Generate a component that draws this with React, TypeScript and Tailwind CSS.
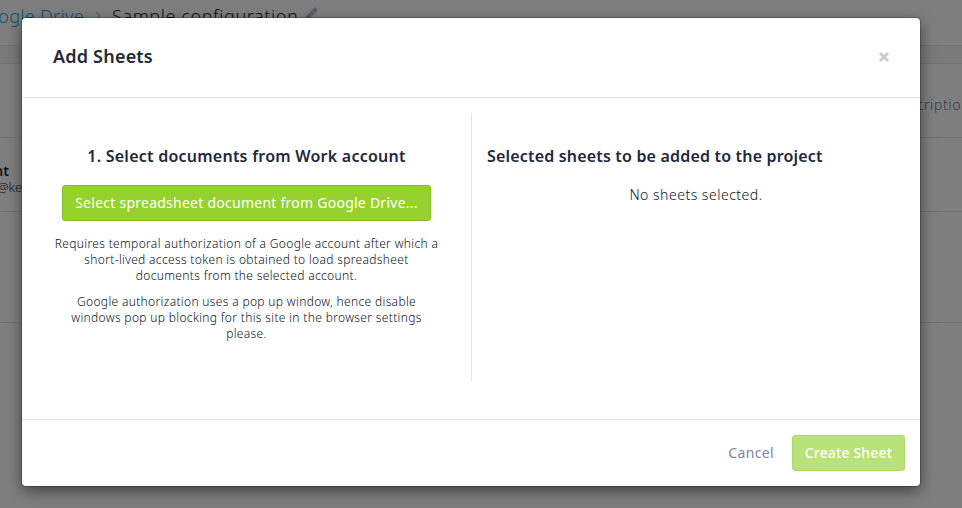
import React from "react";

const font = "font-['Noto_Sans','Open_Sans',sans-serif]";

function Backdrop() {
  return (
    <div className="h-full w-full overflow-hidden bg-white text-[#222939]">
      <div className="flex h-[46px] items-start border-b border-[#e6e6e6] whitespace-nowrap">
        <div className="flex h-[32px] w-[84px] shrink-0 items-center justify-end text-[18px] leading-[32px] font-light text-[#1ea6e6]">
          <span className="tracking-[0.3px]">Google Drive</span>
        </div>
        <svg className="mt-[11px] ml-[11px] h-[10px] w-[6px] shrink-0" viewBox="0 0 6 10" fill="none" stroke="#c4c4c4" strokeWidth="1.3">
          <path d="M1 1l4 4-4 4" />
        </svg>
        <span className="ml-[11px] w-[187px] text-[18px] leading-[32px] font-light tracking-[0.6px]">Sample configuration</span>
        <svg className="mt-[7px] ml-[6px] h-[13px] w-[13px] shrink-0" viewBox="0 0 13 13" fill="#b9bcc4">
          <path d="M0 13l.8-3.800L9.300.7q.7-.7 1.400 0l1.600 1.600q.7.700 0 1.400L3.800 12.200z" />
        </svg>
      </div>
      <div className="h-[18px] border-b border-[#e6e6e6] bg-[#f4f4f4]" />
      <div className="flex h-[74px] items-center justify-end border-b border-[#e6e6e6] pt-[7px]">
        <span className="-mr-[8px] text-[14px] font-light tracking-[0.6px] text-[#6c7795]">Description</span>
      </div>
      <div className="h-[74px] border-b border-[#e6e6e6] pt-[24px]">
        <div className="flex w-[9px] justify-end text-[14px] leading-[17px] font-semibold whitespace-nowrap">Work account</div>
        <div className="flex w-[30px] justify-end text-[13px] leading-[17px] font-light">work@keb</div>
      </div>
      <div className="h-[111px] border-b border-[#e6e6e6]" />
    </div>
  );
}

export default function App() {
  return (
    <div className={`relative h-[508px] w-[962px] overflow-hidden ${font}`}>
      <Backdrop />
      <div className="absolute inset-0 bg-black/50 px-[22px] pt-[18px]">
        <div className="flex h-[468px] w-[898px] flex-col rounded-[4px] bg-white text-[#222939] shadow-[0_0_0_1px_rgba(0,0,0,0.2),0_5px_15px_rgba(0,0,0,0.5)]">
          <header className="flex h-[80px] items-center justify-between border-b border-[#e5e5e5] pr-[31px] pb-[2px] pl-[31px]">
            <h3 className="pb-[2px] text-[18px] leading-[24px] font-semibold tracking-[0.2px]">Add Sheets</h3>
            <button aria-label="Close">
              <svg className="h-[10px] w-[10px]" viewBox="0 0 10 10" stroke="#cccccc" strokeWidth="2.800">
                <path d="M1 1l8 8M9 1L1 9" />
              </svg>
            </button>
          </header>
          <main className="flex h-[321px] pt-[15px]">
            <section className="flex h-[268px] w-[450px] flex-col items-center border-r border-[#e5e5e5] pt-[32px] text-center whitespace-nowrap">
              <h4 className="text-[16px] leading-[22px] font-semibold tracking-[0.24px]">1. Select documents from Work account</h4>
              <button className="mt-[18px] h-[36px] w-[369px] rounded-[3px] border border-[#86bd28] bg-[#96d22d] pb-[1px] text-[14px] text-white">
                <span className="tracking-[0.25px]">Select spreadsheet document from Google Drive...</span>
              </button>
              <p className="mt-[15px] text-[12px] leading-[16px] font-light tracking-[0.34px] text-[#0c1222]">
                <span className="block">Requires temporal authorization of a Google account after which a</span>
                <span className="block">short-lived access token is obtained to load spreadsheet</span>
                <span className="block">documents from the selected account.</span>
              </p>
              <p className="mt-[10px] text-[12px] leading-[16px] font-light tracking-[0.34px] text-[#0c1222]">
                <span className="block">Google authorization uses a pop up window, hence disable</span>
                <span className="block">windows pop up blocking for this site in the browser settings</span>
                <span className="block">please.</span>
              </p>
            </section>
            <section className="flex flex-1 flex-col pt-[32px] pl-[15px] whitespace-nowrap">
              <h4 className="text-[16px] leading-[22px] font-semibold tracking-[0.18px]">Selected sheets to be added to the project</h4>
              <p className="mt-[18px] pr-[15px] text-center text-[14px] leading-[20px] font-light tracking-[0.5px] text-[#0c1222]">No sheets selected.</p>
            </section>
          </main>
          <footer className="flex flex-1 items-center justify-end gap-[18px] border-t border-[#e5e5e5] pr-[15px]">
            <button className="pb-[2px] text-[14px] tracking-[0.35px] text-[#7c87a5]">Cancel</button>
            <button className="h-[36px] w-[113px] rounded-[3px] border border-[#afd76f] bg-[#b9e277] pb-[1px] text-[14px] font-medium tracking-[0.15px] text-white">Create Sheet</button>
          </footer>
        </div>
      </div>
    </div>
  );
}
